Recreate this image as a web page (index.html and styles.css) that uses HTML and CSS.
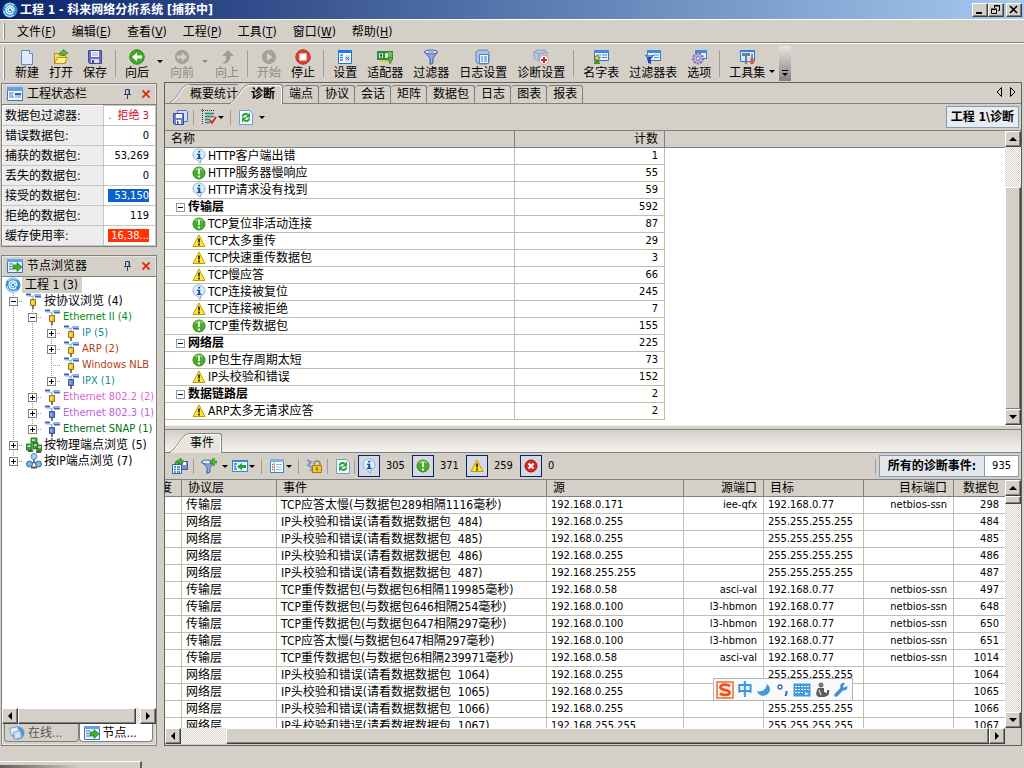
FILE: index.html
```html
<!DOCTYPE html>
<html lang="zh-CN">
<head>
	<meta charset="UTF-8">
	<title>工程 1 - 科来网络分析系统</title>
	<link rel="stylesheet" href="styles.css">
</head>
<body>

<!-- icon set -->
<svg class="sprite" aria-hidden="true">
	<symbol id="i-globe" viewBox="0 0 16 16"><circle cx="8" cy="8" r="7.500" fill="#2f8fd8"/><path d="M3 4a6 6 0 0 1 9-1M2 9a6 6 0 0 0 10 4" stroke="#9fdcff" stroke-width="1.500" fill="none"/><path d="M11 10.500a4 4 0 1 1 1-3c0 2-2 2-2 0a2 2 0 1 0-1 2" stroke="#fff" stroke-width="1.300" fill="none"/></symbol>
	<symbol id="i-new" viewBox="0 0 16 16"><path d="M2.500 1.500h8l3 3v11h-11z" fill="#dcebff" stroke="#6487c8"/><path d="M10.500 1.500v3h3" fill="#fff" stroke="#6487c8"/></symbol>
	<symbol id="i-open" viewBox="0 0 16 16"><path d="M1.500 14.500v-10h4l1 2h6v8z" fill="#f7dc62" stroke="#b98f16"/><path d="M1.500 14.500l3-6h10l-3 6z" fill="#fff08f" stroke="#b98f16"/><path d="M6 5c1-2 3-3 4-3V.500l5 3.500-5 3V5.200C8.500 5 7 5.500 6 5z" fill="#53bd32" stroke="#2a8417" stroke-width=".7"/></symbol>
	<symbol id="i-save" viewBox="0 0 16 16"><path d="M1.500 1.500h13v13h-12l-1-1z" fill="#6872c2" stroke="#41489a"/><path d="M4 2h8v6H4z" fill="#f4f6ff"/><path d="M5 4h6M5 6h6" stroke="#a3a9c8"/><path d="M4 10h8v4H4z" fill="#d8dcee"/><path d="M5 11h2v3H5z" fill="#41489a"/></symbol>
	<symbol id="i-saves" viewBox="0 0 16 16"><path d="M5.500 1.500h9l1 1v10h-10z" fill="#cfe0ff" stroke="#5b6fb8"/><path d="M1.500 4.500h10v11h-9l-1-1z" fill="#7180cb" stroke="#414c99"/><path d="M4 5h6v4H4zM4 11h5v4H4z" fill="#f3f6ff"/><path d="M5 12h1.500v3H5z" fill="#414c99"/></symbol>
	<symbol id="i-back" viewBox="0 0 16 16"><circle cx="8" cy="8" r="7.200" fill="#3eae25" stroke="#278113"/><path d="M3 8l5-4.500v3h5v3H8v3z" fill="#fff"/></symbol>
	<symbol id="i-forward" viewBox="0 0 16 16"><circle cx="8" cy="8" r="7.200" fill="#a5a29d"/><path d="M13 8L8 3.500v3H3v3h5v3z" fill="#d4d0c8"/></symbol>
	<symbol id="i-up" viewBox="0 0 16 16"><path d="M9 1l6 6h-3.500c0 5-3 8-8.500 8 3-1.500 4-4 4-8H3z" fill="#a19e99"/></symbol>
	<symbol id="i-start" viewBox="0 0 16 16"><circle cx="8" cy="8" r="7.200" fill="#a5a29d"/><path d="M6 4l5.500 4L6 12z" fill="#d4d0c8"/></symbol>
	<symbol id="i-stop" viewBox="0 0 16 16"><circle cx="8" cy="8" r="7.200" fill="#e0452e" stroke="#b02a1c"/><path d="M4.500 4.500h7v7h-7z" fill="#fff"/></symbol>
	<symbol id="i-settings" viewBox="0 0 16 16"><path d="M1.500 1.500h13v13h-13z" fill="#fff" stroke="#1d6fd0"/><path d="M1 1h14v3H1z" fill="#1b7be6"/><path d="M3 6h3M3 8.500h3M3 11h3" stroke="#3480d0" stroke-width="1.300"/><path d="M8 6h5v7H8z" fill="#c9ddf6"/><path d="M9 8l3 3M12 8l-3 3" stroke="#d04040"/></symbol>
	<symbol id="i-adapter" viewBox="0 0 16 16"><path d="M0 2h16v9H0z" fill="#2c8f34"/><path d="M2 4h4v5H2zM8 4h3v5H8z" fill="#d9e8c9"/><path d="M3 5h2M3 6.500h2M3 8h2" stroke="#244"/><path d="M12 3v7M14 3v7" stroke="#b8e080"/><path d="M3 11h9v2H3z" fill="#e3c23a"/><path d="M11 8l2 7 3-6z" fill="#60b848" stroke="#236d1b" stroke-width=".6"/></symbol>
	<symbol id="i-filter" viewBox="0 0 16 16"><path d="M1.500 3L7 9v6.500l3-1.500V9l4.500-6z" fill="#94aee3" stroke="#4359a5"/><ellipse cx="8" cy="3" rx="6.500" ry="2" fill="#dfe9ff" stroke="#4359a5"/><path d="M5 3h6" stroke="#6b83c4"/></symbol>
	<symbol id="i-log" viewBox="0 0 16 16"><path d="M1 3l3-2h8l2 2v10l-2 2H4l-3-2z" fill="#a6c3e8" stroke="#6583b4"/><path d="M4.500 5.500h9v9h-9z" fill="#e9f4ff" stroke="#4b84c4"/><path d="M6 8h2M6 10h2M6 12h2M9 8h3M9 10h3M9 12h3" stroke="#3779c4"/></symbol>
	<symbol id="i-diagset" viewBox="0 0 16 16"><path d="M1 3l3-2h8l2 2v7l-4 2-6-1-3-2z" fill="#bac5de" stroke="#8f9dc0"/><path d="M1 3l5 2 8-2M6 5v6" fill="none" stroke="#8f9dc0"/><circle cx="11" cy="11" r="4.500" fill="#fff" stroke="#bd7777" stroke-width=".6"/><path d="M11 8v6M8 11h6" stroke="#df1e1e" stroke-width="2"/></symbol>
	<symbol id="i-names" viewBox="0 0 16 16"><path d="M1.500 1.500h14v10h-14z" fill="#e6f3ff" stroke="#3774c4"/><path d="M1 1h15v3H1z" fill="#3b8ae4"/><path d="M4 6h4M4 8.500h4M9 6h5M9 8.500h5" stroke="#5688ca"/><circle cx="4" cy="9" r="2.300" fill="#e7d64c" stroke="#5b7514"/><path d="M1 15c0-5 6-5 6 0z" fill="#3f9426"/></symbol>
	<symbol id="i-filters" viewBox="0 0 16 16"><path d="M2.500 1.500h13v10h-13z" fill="#e6f3ff" stroke="#3774c4"/><path d="M2 1h14v3H2z" fill="#3b8ae4"/><path d="M9 6h5M9 8.500h5" stroke="#5688ca"/><path d="M0 6h9L6 10v5l-3-1v-4z" fill="#274bb4"/><path d="M2 7h5" stroke="#dce9ff"/></symbol>
	<symbol id="i-options" viewBox="0 0 16 16"><path d="M4.500 1.500h11v8h-11z" fill="#e6f3ff" stroke="#3774c4"/><path d="M4 1h12v3H4z" fill="#3b8ae4"/><circle cx="7" cy="9.500" r="5" fill="#b9b4da" stroke="#7268a4" stroke-dasharray="2 1.400" stroke-width="2"/><circle cx="7" cy="9.500" r="1.800" fill="#f0efff" stroke="#7268a4"/></symbol>
	<symbol id="i-tools" viewBox="0 0 16 16"><path d="M1.500 1.500h14v11h-14z" fill="#cfe9ff" stroke="#2d7dc8"/><path d="M1 1h15v2H1z" fill="#2f83da"/><path d="M3 4h8v3H8v8H6V7H3z" fill="#6f7f99"/><path d="M12 5h2v4h-2z" fill="#8790a4"/><path d="M11.500 9h3v6h-3z" fill="#d9532c"/></symbol>
	<symbol id="i-panel" viewBox="0 0 16 16"><path d="M.500 1.500h15v13H.500z" fill="#f3f8ff" stroke="#3b74bf"/><path d="M0 1h16v4H0z" fill="#5fa3ea"/><path d="M2 7h5M2 9h4M2 11h5" stroke="#4879bd"/><path d="M8 7h6v5H8z" fill="#a9c4ec"/><path d="M8 7h6v2H8z" fill="#3661b0"/></symbol>
	<symbol id="i-explorer" viewBox="0 0 16 16"><path d="M.500 1.500h15v13H.500z" fill="#e7f3ff" stroke="#3b74bf"/><path d="M0 1h16v3H0z" fill="#5fa3ea"/><path d="M2 6h4M2 8.500h3M2 11h4" stroke="#3c74b8"/><path d="M6 7h4V4.500L15 9l-5 4.500V11H6z" fill="#3cb02d" stroke="#1c7815" stroke-width=".7"/></symbol>
	<symbol id="i-online" viewBox="0 0 16 16"><circle cx="9" cy="8" r="6.500" fill="#5597d0"/><path d="M.500 3.500l8-2 2 7-8 2z" fill="#e2efff" stroke="#7ba3cc"/><path d="M4.500 7.500l7-2 1 7-7 2z" fill="#cfe3f8" stroke="#7ba3cc"/></symbol>
	<symbol id="i-pin" viewBox="0 0 10 10"><path d="M2.500 5.500V.500h4v5M6 1v4.500M1 5.500h7M4.500 6v4" stroke="#27407e" fill="none"/></symbol>
	<symbol id="i-x" viewBox="0 0 10 10"><path d="M1.500 1.500l7 7M8.500 1.500l-7 7" stroke="#dc3214" stroke-width="1.800"/></symbol>
	<symbol id="i-info" viewBox="0 0 16 16"><path d="M8 1c3.500 0 6 2.500 6 5.800 0 2.800-2 4.700-4 5.200L9 15.500 6.500 12C4 11.500 2 9.500 2 6.800 2 3.500 4.500 1 8 1z" fill="#dbecfb" stroke="#86aed4"/><path d="M4 4.500C5 2.500 7 2 9 2" fill="none" stroke="#fff"/><path d="M7.200 2.700h2v1.800h-2zM6 5.700h3.200v4H10.500v1.300H6V9.700h1.200V7H6z" fill="#12509e"/></symbol>
	<symbol id="i-ok" viewBox="0 0 16 16"><circle cx="8" cy="8" r="6" fill="#46af27" stroke="#2d8716"/><path d="M4.500 5a4.500 4.500 0 0 1 7 0" stroke="#94dc75" stroke-width="1.500" fill="none"/><path d="M8 4v5M8 10.500v2" stroke="#fff" stroke-width="2"/></symbol>
	<symbol id="i-warn" viewBox="0 0 16 16"><path d="M8 2l6 11.500H2z" fill="#ffe629" stroke="#c19a08" stroke-linejoin="round"/><path d="M8 5.500v4M8 10.500v2" stroke="#222" stroke-width="1.700"/></symbol>
	<symbol id="i-error" viewBox="0 0 16 16"><circle cx="8" cy="8" r="6" fill="#d92a20" stroke="#9a1712"/><path d="M5.500 5.500l5 5M10.500 5.500l-5 5" stroke="#fff" stroke-width="2"/></symbol>
	<symbol id="i-proto" viewBox="0 0 16 16"><path d="M0 1.500h5M9 3.500h6" stroke="#3565c0" stroke-width="2"/><path d="M1 3h4l2 2M15 1.500H9L7 4v3" stroke="#8fb1e4" stroke-width="1.200" fill="none"/><path d="M4.500 6.500h5v6h-5z" fill="#f6c629" stroke="#9b7410"/><path d="M6 8v3" stroke="#fff4a8"/><path d="M7 13v3" stroke="#777" stroke-width="2"/></symbol>
	<symbol id="i-proto2" viewBox="0 0 16 16"><path d="M0 1.500h5M9 3.500h6" stroke="#3565c0" stroke-width="2"/><path d="M1 3h4l2 2M15 1.500H9L7 4v3" stroke="#8fb1e4" stroke-width="1.200" fill="none"/><path d="M4.500 6.500h5v6h-5z" fill="#6587d4" stroke="#38519b"/><path d="M6 8v3" stroke="#c4d5ff"/><path d="M7 13v3" stroke="#777" stroke-width="2"/></symbol>
	<symbol id="i-physical" viewBox="0 0 16 16"><path d="M5 1h6v5H5zM0 7h6v6H0zM7 6h5v6H7zM11 8h5v6h-5z" fill="#45a33a" stroke="#1f671d" stroke-width=".8"/><path d="M6 3h3M1.500 9h3M8 8h3M12 10h3" stroke="#c8f3b8" stroke-width="1.400"/><path d="M2 14h5M10 15h5" stroke="#555" stroke-width="2"/></symbol>
	<symbol id="i-ipnode" viewBox="0 0 16 16"><path d="M8 4v5M8 9l-5 3M8 9l5 3" stroke="#5c6f8e" stroke-width="1.800"/><circle cx="8" cy="3.500" r="3" fill="#a7d0f0" stroke="#568bb8"/><circle cx="3.500" cy="11" r="3" fill="#7eb5e2" stroke="#39699a"/><circle cx="12.500" cy="11" r="3" fill="#7eb5e2" stroke="#39699a"/><path d="M5 14.500h6" stroke="#555" stroke-width="2"/></symbol>
	<symbol id="i-check" viewBox="0 0 16 16"><path d="M0 1.500h14M1.500 0v15" stroke="#333" stroke-dasharray="1 1"/><path d="M4 4.500h9M4 7.500h9M4 10.500h5M4 13.500h5" stroke="#278575" stroke-width="1.600"/><path d="M9 11l2 3 4-6" stroke="#d82020" stroke-width="1.800" fill="none"/></symbol>
	<symbol id="i-refresh" viewBox="0 0 16 16"><path d="M1.500 1.500h10l3 3v11h-13z" fill="#f2f8ff" stroke="#739cd0"/><path d="M4.500 7.500c1-3 4-3 5-1.500M11.500 9.500c-1 3-4 3-5 1.500" stroke="#25a22b" stroke-width="2" fill="none"/><path d="M12 3.500v5H7.500zM4 13.500v-5h4.500z" fill="#25a22b"/></symbol>
	<symbol id="i-export" viewBox="0 0 16 16"><path d="M6.500 3.500h9v8h-9z" fill="#7e8fd0" stroke="#4b5798"/><path d="M11 4h3v3h-3z" fill="#fff"/><path d="M.500 6.500h9v9h-9z" fill="#fff" stroke="#2765ad"/><path d="M2 9h2M5 9h3M2 11.500h2M5 11.500h3M2 14h2M5 14h3" stroke="#287bc4" stroke-width="1.500"/><path d="M3 6c0-3 2-4 5-4V0l4 3.500L8 7V5C6 5 5 5 3 6z" fill="#3ab32b" stroke="#176f12" stroke-width=".6"/></symbol>
	<symbol id="i-addfilter" viewBox="0 0 16 16"><path d="M.500 4L6 9v6.500l3-1.500V9l4-5z" fill="#94aee3" stroke="#4359a5"/><ellipse cx="6.500" cy="4" rx="6" ry="2" fill="#dfe9ff" stroke="#4359a5"/><path d="M9 3h2.500V.500h2V3H16v2h-2.500v2.500h-2V5H9z" fill="#46c52d" stroke="#1f8613" stroke-width=".6"/></symbol>
	<symbol id="i-goto" viewBox="0 0 16 16"><path d="M.500 2.500h15v11H.500z" fill="#e7f5ff" stroke="#3b80ca"/><path d="M0 2h16v2H0z" fill="#3b86d6"/><path d="M2 6h3M2 8.500h2M2 11h3" stroke="#2d77c0" stroke-width="1.300"/><path d="M14 7h-4V5L5 8.500l5 4V10h4z" fill="#2ba229"/></symbol>
	<symbol id="i-columns" viewBox="0 0 16 16"><path d="M1.500 1.500h13v13h-13z" fill="#fff" stroke="#3b80ca"/><path d="M1 1h14v3H1z" fill="#7fb3ea"/><path d="M5.500 4v10" stroke="#7fb3ea"/><path d="M3 6.500h1.500M3 9h1.500M3 11.500h1.500" stroke="#dc5640" stroke-width="1.500"/><path d="M7 6.500h6M7 9h6M7 11.500h6" stroke="#a0b6d0"/></symbol>
	<symbol id="i-lock" viewBox="0 0 16 16"><path d="M1 2l4 2-3 3 5 3-3 3" stroke="#8094c8" stroke-width="2" fill="none"/><path d="M8 8V6a3 3 0 0 1 6 0v2" stroke="#8f8a60" stroke-width="1.500" fill="none"/><path d="M6.500 7.500h9v7h-9z" fill="#f2c72b" stroke="#a17b0b"/><path d="M11 9.500v3" stroke="#6d5203" stroke-width="1.500"/></symbol>
	<symbol id="a-up" viewBox="0 0 8 8"><path d="M4 2l4 4H0z"/></symbol>
	<symbol id="a-down" viewBox="0 0 8 8"><path d="M4 6l4-4H0z"/></symbol>
	<symbol id="a-left" viewBox="0 0 8 8"><path d="M2 4l4-4v8z"/></symbol>
	<symbol id="a-right" viewBox="0 0 8 8"><path d="M6 4L2 0v8z"/></symbol>
	<symbol id="slant" viewBox="0 0 22 20"><path d="M1 20C5 19 7 16 10 11S14 1 22 .500V20z"/><path d="M1 19.500C5 18 7 15 10 11S15 1 22 .500" fill="none" stroke="#808080"/><path d="M3 19.500C6 18 8 15 11 11S16 2 22 1.500" fill="none" stroke="#fff"/></symbol>
</svg>

<header class="titlebar">
	<svg class="icon"><use href="#i-globe"/></svg>
	<h1>工程 1 - 科来网络分析系统 [捕获中]</h1>
	<div class="win-buttons">
		<button type="button" aria-label="最小化"><svg viewBox="0 0 10 10"><path d="M1 8h6" stroke="#000" stroke-width="2"/></svg></button>
		<button type="button" aria-label="还原"><svg viewBox="0 0 10 10"><path d="M3.500 3V.500h5v5H7M3 1h6M.500 4.500h5v4h-5zM0 4h6" stroke="#000" fill="none"/></svg></button>
		<button type="button" aria-label="关闭" class="win-close"><svg viewBox="0 0 10 10"><path d="M1 1l7 7M8 1L1 8" stroke="#000" stroke-width="1.700"/></svg></button>
	</div>
</header>

<nav class="menubar">
	<button type="button">文件(<u>F</u>)</button>
	<button type="button">编辑(<u>E</u>)</button>
	<button type="button">查看(<u>V</u>)</button>
	<button type="button">工程(<u>P</u>)</button>
	<button type="button">工具(<u>T</u>)</button>
	<button type="button">窗口(<u>W</u>)</button>
	<button type="button">帮助(<u>H</u>)</button>
</nav>

<div class="toolbar">
	<button type="button"><svg class="icon"><use href="#i-new"/></svg>新建</button>
	<button type="button"><svg class="icon"><use href="#i-open"/></svg>打开</button>
	<button type="button"><svg class="icon"><use href="#i-save"/></svg>保存</button>
	<span class="sep"></span>
	<button type="button"><svg class="icon"><use href="#i-back"/></svg>向后</button>
	<button type="button" class="drop" aria-label="向后列表"></button>
	<button type="button" disabled><svg class="icon"><use href="#i-forward"/></svg>向前</button>
	<button type="button" class="drop" aria-label="向前列表" disabled></button>
	<button type="button" disabled><svg class="icon"><use href="#i-up"/></svg>向上</button>
	<span class="sep"></span>
	<button type="button" disabled><svg class="icon"><use href="#i-start"/></svg>开始</button>
	<button type="button"><svg class="icon"><use href="#i-stop"/></svg>停止</button>
	<span class="sep"></span>
	<button type="button"><svg class="icon"><use href="#i-settings"/></svg>设置</button>
	<button type="button"><svg class="icon"><use href="#i-adapter"/></svg>适配器</button>
	<button type="button"><svg class="icon"><use href="#i-filter"/></svg>过滤器</button>
	<button type="button"><svg class="icon"><use href="#i-log"/></svg>日志设置</button>
	<button type="button"><svg class="icon"><use href="#i-diagset"/></svg>诊断设置</button>
	<span class="sep"></span>
	<button type="button"><svg class="icon"><use href="#i-names"/></svg>名字表</button>
	<button type="button"><svg class="icon"><use href="#i-filters"/></svg>过滤器表</button>
	<button type="button"><svg class="icon"><use href="#i-options"/></svg>选项</button>
	<span class="sep"></span>
	<button type="button" class="with-low"><svg class="icon"><use href="#i-tools"/></svg>工具集</button>
	<button type="button" class="drop low" aria-label="工具集列表"></button>
	<button type="button" class="more" aria-label="更多按钮"></button>
</div>

<div class="workspace">
	<aside class="sidebar">
		<section class="panel">
			<div class="panel-title">
				<svg class="icon"><use href="#i-panel"/></svg>
				<h2>工程状态栏</h2>
				<button type="button" aria-label="固定"><svg><use href="#i-pin"/></svg></button>
				<button type="button" aria-label="关闭"><svg><use href="#i-x"/></svg></button>
			</div>
			<table class="status">
				<tr><th>数据包过滤器:</th><td><span class="red">. &nbsp;拒绝 3</span></td></tr>
				<tr><th>错误数据包:</th><td><span>0</span></td></tr>
				<tr><th>捕获的数据包:</th><td><span>53,269</span></td></tr>
				<tr><th>丢失的数据包:</th><td><span>0</span></td></tr>
				<tr><th>接受的数据包:</th><td><span class="bar-blue">53,150</span></td></tr>
				<tr><th>拒绝的数据包:</th><td><span>119</span></td></tr>
				<tr><th>缓存使用率:</th><td><span class="bar-red">16,38...</span></td></tr>
			</table>
		</section>

		<section class="panel explorer">
			<div class="panel-title">
				<svg class="icon"><use href="#i-explorer"/></svg>
				<h2>节点浏览器</h2>
				<button type="button" aria-label="固定"><svg><use href="#i-pin"/></svg></button>
				<button type="button" aria-label="关闭"><svg><use href="#i-x"/></svg></button>
			</div>
			<ul class="tree">
				<li class="root"><svg class="icon"><use href="#i-globe"/></svg><span class="selected">工程 1 (3)</span></li>
				<li><i class="guide branch"><button type="button" class="fold open" aria-label="折叠"></button></i><svg class="icon"><use href="#i-proto"/></svg><span>按协议浏览 (4)</span></li>
				<li class="latin green"><i class="guide"></i><i class="guide branch"><button type="button" class="fold open" aria-label="折叠"></button></i><svg class="icon"><use href="#i-proto"/></svg><span>Ethernet II (4)</span></li>
				<li class="latin teal"><i class="guide"></i><i class="guide"></i><i class="guide branch"><button type="button" class="fold" aria-label="展开"></button></i><svg class="icon"><use href="#i-proto"/></svg><span>IP (5)</span></li>
				<li class="latin rust"><i class="guide"></i><i class="guide"></i><i class="guide branch"><button type="button" class="fold" aria-label="展开"></button></i><svg class="icon"><use href="#i-proto"/></svg><span>ARP (2)</span></li>
				<li class="latin rust"><i class="guide"></i><i class="guide"></i><i class="guide branch"></i><svg class="icon"><use href="#i-proto"/></svg><span>Windows NLB</span></li>
				<li class="latin teal"><i class="guide"></i><i class="guide"></i><i class="guide branch last"><button type="button" class="fold" aria-label="展开"></button></i><svg class="icon"><use href="#i-proto2"/></svg><span>IPX (1)</span></li>
				<li class="latin pink"><i class="guide"></i><i class="guide branch"><button type="button" class="fold" aria-label="展开"></button></i><svg class="icon"><use href="#i-proto"/></svg><span>Ethernet 802.2 (2)</span></li>
				<li class="latin violet"><i class="guide"></i><i class="guide branch"><button type="button" class="fold" aria-label="展开"></button></i><svg class="icon"><use href="#i-proto2"/></svg><span>Ethernet 802.3 (1)</span></li>
				<li class="latin dkgreen"><i class="guide"></i><i class="guide branch last"><button type="button" class="fold" aria-label="展开"></button></i><svg class="icon"><use href="#i-proto2"/></svg><span>Ethernet SNAP (1)</span></li>
				<li><i class="guide branch"><button type="button" class="fold" aria-label="展开"></button></i><svg class="icon"><use href="#i-physical"/></svg><span>按物理端点浏览 (5)</span></li>
				<li><i class="guide branch last"><button type="button" class="fold" aria-label="展开"></button></i><svg class="icon"><use href="#i-ipnode"/></svg><span>按IP端点浏览 (7)</span></li>
			</ul>
			<div class="hscroll">
				<button type="button" aria-label="向左滚动"><svg><use href="#a-left"/></svg></button>
				<div class="track"><div class="thumb side-thumb"></div></div>
				<button type="button" aria-label="向右滚动"><svg><use href="#a-right"/></svg></button>
			</div>
			<div class="bottom-tabs">
				<button type="button"><svg class="icon"><use href="#i-online"/></svg>在线...</button>
				<button type="button" class="active"><svg class="icon"><use href="#i-explorer"/></svg>节点...</button>
			</div>
		</section>
	</aside>

	<main class="main">
		<section class="diagnosis">
			<div class="tabs">
				<button type="button" class="slanted"><svg class="slant"><use href="#slant"/></svg><span>概要统计</span></button>
				<button type="button" class="slanted active"><svg class="slant"><use href="#slant"/></svg><span>诊断</span></button>
				<button type="button" class="tab">端点</button>
				<button type="button" class="tab">协议</button>
				<button type="button" class="tab">会话</button>
				<button type="button" class="tab">矩阵</button>
				<button type="button" class="tab">数据包</button>
				<button type="button" class="tab">日志</button>
				<button type="button" class="tab">图表</button>
				<button type="button" class="tab">报表</button>
				<div class="tab-nav">
					<button type="button" aria-label="上一个"><svg viewBox="0 0 6 10"><path d="M5.500 .500v9L1 5z" fill="none" stroke="#000"/></svg></button>
					<button type="button" aria-label="下一个"><svg viewBox="0 0 6 10"><path d="M.500 .500v9L5 5z" fill="none" stroke="#000"/></svg></button>
				</div>
			</div>
			<div class="subbar">
				<button type="button" aria-label="保存"><svg class="icon"><use href="#i-saves"/></svg></button>
				<span class="sep"></span>
				<button type="button" aria-label="选择"><svg class="icon"><use href="#i-check"/></svg></button>
				<button type="button" class="drop" aria-label="选择列表"></button>
				<span class="sep"></span>
				<button type="button" aria-label="刷新"><svg class="icon"><use href="#i-refresh"/></svg></button>
				<button type="button" class="drop wide" aria-label="刷新列表"></button>
				<strong class="path">工程 1\诊断</strong>
			</div>
			<div class="grid-area">
				<div class="grid-view">
					<table class="grid diag">
						<thead><tr><th class="c-name">名称</th><th class="c-count num">计数</th></tr></thead>
						<tbody>
							<tr><td><div class="item"><svg class="icon"><use href="#i-info"/></svg>HTTP客户端出错</div></td><td class="num">1</td></tr>
							<tr><td><div class="item"><svg class="icon"><use href="#i-ok"/></svg>HTTP服务器慢响应</div></td><td class="num">55</td></tr>
							<tr><td><div class="item"><svg class="icon"><use href="#i-info"/></svg>HTTP请求没有找到</div></td><td class="num">59</td></tr>
							<tr><td><div class="group"><button type="button" class="fold open" aria-label="折叠"></button>传输层</div></td><td class="num">592</td></tr>
							<tr><td><div class="item"><svg class="icon"><use href="#i-ok"/></svg>TCP复位非活动连接</div></td><td class="num">87</td></tr>
							<tr><td><div class="item"><svg class="icon"><use href="#i-warn"/></svg>TCP太多重传</div></td><td class="num">29</td></tr>
							<tr><td><div class="item"><svg class="icon"><use href="#i-warn"/></svg>TCP快速重传数据包</div></td><td class="num">3</td></tr>
							<tr><td><div class="item"><svg class="icon"><use href="#i-warn"/></svg>TCP慢应答</div></td><td class="num">66</td></tr>
							<tr><td><div class="item"><svg class="icon"><use href="#i-info"/></svg>TCP连接被复位</div></td><td class="num">245</td></tr>
							<tr><td><div class="item"><svg class="icon"><use href="#i-warn"/></svg>TCP连接被拒绝</div></td><td class="num">7</td></tr>
							<tr><td><div class="item"><svg class="icon"><use href="#i-ok"/></svg>TCP重传数据包</div></td><td class="num">155</td></tr>
							<tr><td><div class="group"><button type="button" class="fold open" aria-label="折叠"></button>网络层</div></td><td class="num">225</td></tr>
							<tr><td><div class="item"><svg class="icon"><use href="#i-ok"/></svg>IP包生存周期太短</div></td><td class="num">73</td></tr>
							<tr><td><div class="item"><svg class="icon"><use href="#i-warn"/></svg>IP头校验和错误</div></td><td class="num">152</td></tr>
							<tr><td><div class="group"><button type="button" class="fold open" aria-label="折叠"></button>数据链路层</div></td><td class="num">2</td></tr>
							<tr><td><div class="item"><svg class="icon"><use href="#i-warn"/></svg>ARP太多无请求应答</div></td><td class="num">2</td></tr>
						</tbody>
					</table>
				</div>
				<div class="vscroll">
					<button type="button" aria-label="向上滚动"><svg><use href="#a-up"/></svg></button>
					<div class="track"><div class="thumb diag-thumb"></div></div>
					<button type="button" aria-label="向下滚动"><svg><use href="#a-down"/></svg></button>
				</div>
			</div>
		</section>

		<div class="splitter"></div>

		<section class="events">
			<div class="tabs event-tabs">
				<button type="button" class="slanted current"><svg class="slant"><use href="#slant"/></svg><span>事件</span></button>
			</div>
			<div class="subbar">
				<button type="button" aria-label="导出"><svg class="icon"><use href="#i-export"/></svg></button>
				<span class="sep"></span>
				<button type="button" aria-label="添加过滤器"><svg class="icon"><use href="#i-addfilter"/></svg></button>
				<button type="button" class="drop wide" aria-label="过滤器列表"></button>
				<button type="button" aria-label="定位"><svg class="icon"><use href="#i-goto"/></svg></button>
				<button type="button" class="drop" aria-label="定位列表"></button>
				<span class="sep"></span>
				<button type="button" aria-label="列"><svg class="icon"><use href="#i-columns"/></svg></button>
				<button type="button" class="drop" aria-label="列列表"></button>
				<span class="sep"></span>
				<button type="button" aria-label="锁定"><svg class="icon"><use href="#i-lock"/></svg></button>
				<span class="sep"></span>
				<button type="button" aria-label="刷新"><svg class="icon"><use href="#i-refresh"/></svg></button>
				<span class="sep tight"></span>
				<button type="button" class="toggle" aria-pressed="true" aria-label="信息"><svg class="icon"><use href="#i-info"/></svg></button><span class="amount">305</span>
				<button type="button" class="toggle" aria-pressed="true" aria-label="注意"><svg class="icon"><use href="#i-ok"/></svg></button><span class="amount">371</span>
				<button type="button" class="toggle" aria-pressed="true" aria-label="警告"><svg class="icon"><use href="#i-warn"/></svg></button><span class="amount">259</span>
				<button type="button" class="toggle" aria-pressed="true" aria-label="错误"><svg class="icon"><use href="#i-error"/></svg></button><span class="amount">0</span>
				<span class="sep before-total"></span>
				<div class="total"><strong>所有的诊断事件:</strong><span>935</span></div>
			</div>
			<div class="grid-area">
				<div class="events-body">
					<div class="grid-view">
						<table class="grid event-grid">
							<thead>
								<tr><th class="c-level num">度</th><th class="c-layer">协议层</th><th>事件</th><th class="c-src">源</th><th class="c-sport num">源端口</th><th class="c-dst">目标</th><th class="c-dport num">目标端口</th><th class="c-packet num">数据包</th></tr>
							</thead>
							<tbody>
								<tr><td></td><td>传输层</td><td>TCP应答太慢(与数据包289相隔1116毫秒)</td><td class="latin">192.168.0.171</td><td class="num">iee-qfx</td><td class="latin">192.168.0.77</td><td class="num">netbios-ssn</td><td class="num">298</td></tr>
								<tr><td></td><td>网络层</td><td>IP头校验和错误(请看数据数据包&nbsp; 484)</td><td class="latin">192.168.0.255</td><td></td><td class="latin">255.255.255.255</td><td></td><td class="num">484</td></tr>
								<tr><td></td><td>网络层</td><td>IP头校验和错误(请看数据数据包&nbsp; 485)</td><td class="latin">192.168.0.255</td><td></td><td class="latin">255.255.255.255</td><td></td><td class="num">485</td></tr>
								<tr><td></td><td>网络层</td><td>IP头校验和错误(请看数据数据包&nbsp; 486)</td><td class="latin">192.168.0.255</td><td></td><td class="latin">255.255.255.255</td><td></td><td class="num">486</td></tr>
								<tr><td></td><td>网络层</td><td>IP头校验和错误(请看数据数据包&nbsp; 487)</td><td class="latin">192.168.255.255</td><td></td><td class="latin">255.255.255.255</td><td></td><td class="num">487</td></tr>
								<tr><td></td><td>传输层</td><td>TCP重传数据包(与数据包6相隔119985毫秒)</td><td class="latin">192.168.0.58</td><td class="num">asci-val</td><td class="latin">192.168.0.77</td><td class="num">netbios-ssn</td><td class="num">497</td></tr>
								<tr><td></td><td>传输层</td><td>TCP重传数据包(与数据包646相隔254毫秒)</td><td class="latin">192.168.0.100</td><td class="num">l3-hbmon</td><td class="latin">192.168.0.77</td><td class="num">netbios-ssn</td><td class="num">648</td></tr>
								<tr><td></td><td>传输层</td><td>TCP重传数据包(与数据包647相隔297毫秒)</td><td class="latin">192.168.0.100</td><td class="num">l3-hbmon</td><td class="latin">192.168.0.77</td><td class="num">netbios-ssn</td><td class="num">650</td></tr>
								<tr><td></td><td>传输层</td><td>TCP应答太慢(与数据包647相隔297毫秒)</td><td class="latin">192.168.0.100</td><td class="num">l3-hbmon</td><td class="latin">192.168.0.77</td><td class="num">netbios-ssn</td><td class="num">651</td></tr>
								<tr><td></td><td>传输层</td><td>TCP重传数据包(与数据包6相隔239971毫秒)</td><td class="latin">192.168.0.58</td><td class="num">asci-val</td><td class="latin">192.168.0.77</td><td class="num">netbios-ssn</td><td class="num">1014</td></tr>
								<tr><td></td><td>网络层</td><td>IP头校验和错误(请看数据数据包&nbsp; 1064)</td><td class="latin">192.168.0.255</td><td></td><td class="latin">255.255.255.255</td><td></td><td class="num">1064</td></tr>
								<tr><td></td><td>网络层</td><td>IP头校验和错误(请看数据数据包&nbsp; 1065)</td><td class="latin">192.168.0.255</td><td></td><td class="latin">255.255.255.255</td><td></td><td class="num">1065</td></tr>
								<tr><td></td><td>网络层</td><td>IP头校验和错误(请看数据数据包&nbsp; 1066)</td><td class="latin">192.168.0.255</td><td></td><td class="latin">255.255.255.255</td><td></td><td class="num">1066</td></tr>
								<tr><td></td><td>网络层</td><td>IP头校验和错误(请看数据数据包&nbsp; 1067)</td><td class="latin">192.168.255.255</td><td></td><td class="latin">255.255.255.255</td><td></td><td class="num">1067</td></tr>
							</tbody>
						</table>
					</div>
					<div class="hscroll">
						<button type="button" aria-label="向左滚动"><svg><use href="#a-left"/></svg></button>
						<div class="track"><div class="thumb event-hthumb"></div></div>
						<button type="button" aria-label="向右滚动"><svg><use href="#a-right"/></svg></button>
					</div>
				</div>
				<div class="vscroll event-vscroll">
					<button type="button" aria-label="向上滚动"><svg><use href="#a-up"/></svg></button>
					<div class="track"><div class="thumb event-vthumb"></div></div>
					<button type="button" aria-label="向下滚动"><svg><use href="#a-down"/></svg></button>
				</div>
			</div>
		</section>
	</main>
</div>

<footer class="statusbar"><div class="minimized"></div></footer>

<!-- floating input method bar -->
<div class="ime">
	<svg class="ime-logo" viewBox="0 0 18 18"><path d="M1 1h16v16H1z" fill="#fff1e6" stroke="#ef6b35" stroke-width="1.500"/><path d="M14 5C11 3 4 3 4.500 6.500S13.500 8.500 13.500 11.500 7 14.500 4 12.500" stroke="#ee4f1f" stroke-width="2.800" fill="none"/></svg>
	<b>中</b>
	<svg viewBox="0 0 16 16"><path d="M11 2c4 3 4 8 0 10.500-4 2.500-9 1-10-3.500 5 1.500 9-1.500 10-7z" fill="#4599dc"/></svg>
	<svg viewBox="0 0 16 16"><circle cx="5" cy="5" r="2" fill="none" stroke="#3565bd" stroke-width="1.300"/><path d="M11.500 9v2l-1 3" stroke="#3565bd" stroke-width="2" fill="none"/></svg>
	<svg class="ime-keys" viewBox="0 0 18 14"><path d="M.500 .500h17v13H.500z" fill="#419bdf"/><path d="M2 3.500h14M2 6.500h14M2 9.500h9" stroke="#fff" stroke-dasharray="2 1"/><path d="M12 9l4 2-4 1z" fill="#fff"/></svg>
	<svg viewBox="0 0 16 16"><circle cx="7" cy="3" r="2.500" fill="#777"/><path d="M4 6h6v4l3 1V8h2c1 5-2 7-6 7H5c-4-1-3-5-1-9z" fill="#5c5c5c"/><path d="M5 8l2 5" stroke="#ccc" stroke-width="1.500"/></svg>
	<svg viewBox="0 0 16 16"><path d="M3 13l6-6" stroke="#3c8fda" stroke-width="3.500" stroke-linecap="round"/><path d="M14 4l-3 2-1-2 2-3c-4-1-6 3-4 6s8 1 6-3z" fill="#3c8fda"/></svg>
</div>

</body>
</html>
```

FILE: styles.css
```css
* {
    box-sizing: border-box;
}

body {
    margin: 0;
    height: 100vh;
    display: flex;
    flex-direction: column;
    overflow: hidden;
    position: relative;
    background: #d4d0c8;
    color: #000;
    font-family: "DejaVu Sans Condensed", "Noto Sans CJK SC", sans-serif;
    font-size: 12px;
    line-height: 16px;
    white-space: nowrap;
}

button {
    margin: 0;
    padding: 0;
    border: 0;
    background: none;
    color: inherit;
    font: inherit;
    flex: none;
}

h1, h2 {
    margin: 0;
    font-size: 12px;
    line-height: 16px;
}

h2 {
    font-weight: normal;
}

ul {
    margin: 0;
    padding: 0;
    list-style: none;
}

.sprite {
    position: absolute;
    width: 0;
    height: 0;
}

.icon {
    display: block;
    flex: none;
    width: 16px;
    height: 16px;
}

.latin {
    font-size: 11px;
}

/* title bar */
.titlebar {
    flex: none;
    display: flex;
    align-items: center;
    gap: 2px;
    height: 19px;
    padding: 0 2px;
    background: linear-gradient(90deg, #0a246a, #a6caf0);
    color: #fff;
}

.titlebar h1 {
    flex: 1;
}

.win-buttons {
    display: flex;
}

.win-buttons button {
    display: flex;
    align-items: center;
    justify-content: center;
    width: 16px;
    height: 14px;
}

.win-buttons svg {
    width: 10px;
    height: 10px;
}

.win-buttons .win-close {
    margin-left: 2px;
}

.win-buttons button,
.vscroll button,
.hscroll button,
.thumb {
    background: #d4d0c8;
    border: 1px solid;
    border-color: #fff #404040 #404040 #fff;
    box-shadow: inset -1px -1px #808080;
}

/* menu */
.menubar {
    flex: none;
    display: flex;
    align-items: center;
    height: 24px;
    padding: 2px 0 0 9px;
    border-top: 1px solid #fff;
    border-bottom: 1px solid #808080;
    background: linear-gradient(90deg, transparent 3px, #fff 3px, #fff 4px, #808080 4px, #808080 5px, transparent 5px) no-repeat 0 3px / 100% 16px;
}

.menubar button {
    padding: 0 8px;
}

/* main toolbar */
.toolbar {
    flex: none;
    display: flex;
    align-items: stretch;
    height: 39px;
    padding: 2px 0 1px 10px;
    border-top: 1px solid #fff;
    background: linear-gradient(90deg, transparent 3px, #fff 3px, #fff 4px, #808080 4px, #808080 5px, transparent 5px) no-repeat 0 3px / 100% 32px;
}

.toolbar button {
    display: flex;
    flex-direction: column;
    align-items: center;
    padding: 3px 5px 0;
    line-height: 16px;
}

.toolbar button:disabled {
    color: #8c8985;
}

.sep {
    flex: none;
    width: 1px;
    background: #a09d96;
}

.toolbar .sep {
    margin: 4px 4px 4px 3px;
}

.drop::after {
    content: "";
    border: 3px solid transparent;
    border-top-color: currentColor;
    border-bottom: 0;
}

.toolbar .drop {
    width: 11px;
    padding: 14px 0 0;
}

.toolbar .with-low {
    padding-right: 2px;
}

.toolbar .low {
    width: 10px;
    padding-top: 24px;
}

.toolbar .more {
    width: 12px;
    margin-left: 2px;
    padding: 24px 0 0;
    background: linear-gradient(#e8e6e0, #808080);
}

.more::before {
    content: "";
    width: 6px;
    border-top: 1px solid #000;
    margin-bottom: 2px;
}

.more::after {
    content: "";
    border: 3px solid transparent;
    border-top-color: #000;
    border-bottom: 0;
}

/* panels */
.workspace {
    flex: 1;
    min-height: 0;
    display: flex;
    gap: 7px;
    padding: 0 2px 1px 1px;
}

.sidebar {
    flex: none;
    width: 156px;
    display: flex;
    flex-direction: column;
    gap: 8px;
    padding-top: 1px;
}

.panel {
    border: 1px solid #808080;
    box-shadow: inset 0 0 0 1px #e9e7e2;
}

.panel-title {
    display: flex;
    align-items: center;
    gap: 4px;
    height: 21px;
    padding: 0 3px 0 5px;
    border-bottom: 1px solid #808080;
}

.panel-title h2 {
    flex: 1;
}

.panel-title button {
    width: 14px;
    height: 14px;
    padding: 2px;
}

.panel-title button svg {
    display: block;
    width: 10px;
    height: 10px;
}

.status {
    width: 100%;
    table-layout: fixed;
    border-collapse: collapse;
    background: #fff;
    border: 1px solid #fff;
}

.status th {
    width: 101px;
    height: 20px;
    padding: 0 2px;
    font-weight: normal;
    text-align: left;
    background: #ececec;
    border-bottom: 1px solid #c8c5be;
}

.status td {
    padding: 0 6px 0 4px;
    font-size: 11px;
    line-height: 13px;
    text-align: right;
    border: 1px solid #c8c5be;
}

.status span {
    display: block;
    overflow: hidden;
}

.red {
    color: #d20a1e;
}

.bar-blue {
    background: #0a64c8;
    color: #fff;
}

.bar-red {
    background: #ff3200;
    color: #fff;
}

.explorer {
    flex: 1;
    min-height: 0;
    display: flex;
    flex-direction: column;
}

/* tree */
.tree {
    flex: 1;
    min-height: 0;
    overflow: hidden;
    padding-left: 2px;
    background: #fff;
}

.tree li {
    display: flex;
    align-items: center;
    height: 16px;
}

.tree li .icon {
    margin: 0 2px 0 3px;
}

.tree .root .icon {
    margin: 0 1px;
}

.selected {
    padding: 0 4px 0 3px;
    background: #d4d0c8;
}

.guide {
    flex: none;
    display: flex;
    align-items: center;
    justify-content: center;
    width: 19px;
    height: 16px;
    background: repeating-linear-gradient(#999 0 1px, #fff 1px 2px) no-repeat 9px 0 / 1px 16px;
}

.branch {
    background: repeating-linear-gradient(#999 0 1px, #fff 1px 2px) no-repeat 9px 0 / 1px 16px,
        repeating-linear-gradient(90deg, #999 0 1px, #fff 1px 2px) no-repeat 9px 8px / 10px 1px;
}

.branch.last {
    background: repeating-linear-gradient(#999 0 1px, #fff 1px 2px) no-repeat 9px 0 / 1px 8px,
        repeating-linear-gradient(90deg, #999 0 1px, #fff 1px 2px) no-repeat 9px 8px / 10px 1px;
}

.fold {
    width: 9px;
    height: 9px;
    border: 1px solid #808080;
    background: linear-gradient(#000, #000) no-repeat center / 5px 1px,
        linear-gradient(#000, #000) no-repeat center / 1px 5px, #fff;
}

.fold.open {
    background: linear-gradient(#000, #000) no-repeat center / 5px 1px, #fff;
}

.green { color: #008c14; }
.teal { color: #148c96; }
.rust { color: #b43c14; }
.pink { color: #dc64d2; }
.violet { color: #b464e6; }
.dkgreen { color: #006e14; }

/* scroll bars */
.hscroll,
.vscroll {
    flex: none;
    display: flex;
}

.vscroll {
    flex-direction: column;
    width: 16px;
}

.hscroll {
    height: 16px;
}

.hscroll button,
.vscroll button {
    display: flex;
    align-items: center;
    justify-content: center;
    width: 16px;
    height: 16px;
}

.hscroll button svg,
.vscroll button svg {
    width: 8px;
    height: 8px;
}

.track {
    flex: 1;
    min-width: 0;
    min-height: 0;
    background: repeating-conic-gradient(#fff 0 25%, #d4d0c8 0 50%) 0 0 / 2px 2px;
}

.hscroll .thumb {
    height: 100%;
}

.side-thumb {
    width: 97%;
}

.diag-thumb {
    height: 85%;
    margin-top: 40px;
}

.event-hthumb {
    margin-left: 45px;
}

.event-vthumb {
    height: 8px;
}

.bottom-tabs {
    display: flex;
    height: 21px;
    padding: 0 3px 3px 2px;
}

.bottom-tabs button {
    flex: 1;
    display: flex;
    align-items: center;
    gap: 3px;
    padding-left: 4px;
    border: 1px solid #808080;
    border-top: 0;
    border-radius: 0 0 4px 4px;
    color: #555;
}

.bottom-tabs .active {
    background: #fff;
    color: #000;
}

/* right side */
.main {
    flex: 1;
    min-width: 0;
    display: flex;
    flex-direction: column;
    padding-bottom: 1px;
    border: 1px solid #606060;
}

.diagnosis {
    flex: none;
    display: flex;
    flex-direction: column;
}

.events {
    flex: 1;
    min-height: 0;
    display: flex;
    flex-direction: column;
}

.splitter {
    flex: none;
    height: 5px;
    border-top: 1px solid #f0eee9;
    border-bottom: 1px solid #808080;
}

.tabs {
    flex: none;
    display: flex;
    align-items: flex-end;
    height: 21px;
    padding-left: 3px;
    border-bottom: 1px solid #808080;
}

.slanted {
    display: flex;
    height: 19px;
    line-height: 19px;
}

.slant {
    width: 22px;
    height: 19px;
    fill: #d4d0c8;
}

.slanted span {
    border-top: 1px solid #808080;
}

.slanted.active,
.slanted.current {
    height: 20px;
    margin-bottom: -1px;
}

.slanted.active {
    margin-left: -10px;
    font-weight: bold;
}

.slanted.active .slant,
.slanted.current .slant {
    height: 20px;
}

.slanted.active span,
.slanted.current span {
    padding-right: 7px;
    border-right: 1px solid #808080;
    border-radius: 0 3px 0 0;
    background: #d4d0c8;
    box-shadow: inset -1px 1px #fff;
}

.slanted.active span {
    padding-left: 1px;
}

.tab {
    height: 18px;
    padding: 0 5px 0 6px;
    border-top: 1px solid #808080;
    border-right: 1px solid #808080;
    border-radius: 4px 3px 0 0;
    line-height: 17px;
}

.tab-nav {
    display: flex;
    gap: 8px;
    margin-left: auto;
    padding: 0 5px 6px 0;
}

.tab-nav svg {
    display: block;
    width: 6px;
    height: 10px;
}

.event-tabs {
    height: 23px;
    background: linear-gradient(#d4d0c8, #f4f2ee);
}

.event-tabs .current span {
    background: #e8e5df;
}

.event-tabs .slant {
    fill: #e8e5df;
}

.subbar {
    flex: none;
    display: flex;
    align-items: center;
    height: 27px;
    padding: 0 2px 0 7px;
    border-bottom: 1px solid #808080;
}

.subbar .sep {
    height: 15px;
    margin: 0 7px 0 5px;
}

.subbar .tight {
    margin: 0 3px 0 3px;
}

.subbar .before-total {
    margin: 0 3px 0 auto;
}

.subbar .drop {
    display: flex;
    align-items: center;
    justify-content: center;
    width: 8px;
    height: 16px;
}

.subbar .wide {
    width: 15px;
}

.toggle {
    display: flex;
    align-items: center;
    justify-content: center;
    width: 22px;
    height: 22px;
    border: 1px solid #0a246a;
    background: #d6d9e4;
}

.amount {
    width: 32px;
    padding-left: 6px;
    font-size: 11px;
}

.path {
    margin-left: auto;
    padding: 2px 4px;
    border: 1px solid #7f9db9;
    background: #eaebee;
}

.total {
    display: flex;
    border: 1px solid #7f9db9;
    background: #e4e7ec;
    line-height: 20px;
}

.total strong {
    padding: 0 8px;
}

.total span {
    padding: 0 7px;
    border-left: 1px solid #7f9db9;
    background: #fff;
    font-size: 11px;
}

/* tables */
.grid-area {
    flex: 1;
    min-height: 0;
    display: flex;
}

.grid-view {
    flex: 1;
    min-width: 0;
    min-height: 0;
    overflow: hidden;
    background: linear-gradient(#d4d0c8 16px, #808080 16px, #808080 17px, #fff 17px);
}

.diagnosis .grid-view {
    padding-bottom: 5px;
}

.events-body {
    flex: 1;
    min-width: 0;
    display: flex;
    flex-direction: column;
}

.grid {
    table-layout: fixed;
    border-collapse: separate;
    border-spacing: 0;
}

.grid th,
.grid td {
    height: 17px;
    padding: 0 4px;
    overflow: hidden;
    line-height: 16px;
    border-right: 1px solid #c0bdb0;
    border-bottom: 1px solid #c0bdb0;
}

.grid th {
    padding: 0 6px;
    text-align: left;
    font-weight: normal;
    background: #d4d0c8;
    border-color: #808080;
}

.grid .num {
    padding-right: 6px;
    text-align: right;
}

.grid td.num {
    font-size: 11px;
}

.diag {
    width: 500px;
}

.c-name { width: 350px; }
.c-count { width: 150px; }

.item,
.group {
    display: flex;
    align-items: center;
    height: 16px;
}

.item {
    gap: 1px;
    padding-left: 22px;
}

.group {
    gap: 3px;
    padding-left: 7px;
    font-weight: bold;
}

.group .fold {
    border-color: #7f9db9;
}

/* scrolled a little to the right, so the first column is cut */
.event-grid {
    width: calc(100% + 21px);
    margin-left: -20px;
}

.c-level { width: 37px; }
.c-layer { width: 95px; }
.c-src { width: 137px; }
.c-sport { width: 80px; }
.c-dst { width: 100px; }
.c-dport { width: 90px; }
.c-packet { width: 52px; }

.event-grid th.c-level {
    padding-right: 9px;
}

.event-vscroll {
    padding-bottom: 16px;
}

/* bottom */
.statusbar {
    flex: none;
    display: flex;
    align-items: flex-end;
    height: 21px;
}

.minimized {
    width: 142px;
    height: 7px;
    border-top: 1px solid #fff;
    border-right: 2px solid #606060;
    background: linear-gradient(90deg, #606060, #d4d0c8 60%) no-repeat 0 3px / 100% 4px;
}

.ime {
    position: absolute;
    right: 171px;
    bottom: 67px;
    display: flex;
    align-items: center;
    justify-content: space-between;
    width: 140px;
    height: 23px;
    padding: 0 3px 0 2px;
    border: 1px solid #b4b4b4;
    background: #f8f9fb;
}

.ime svg {
    width: 16px;
    height: 16px;
}

.ime b {
    color: #3c96dc;
    font-size: 16px;
}

.ime .ime-logo {
    width: 18px;
    height: 18px;
}

.ime .ime-keys {
    width: 18px;
    height: 14px;
}
```
